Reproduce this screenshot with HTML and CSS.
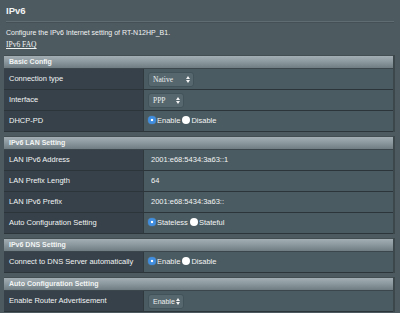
FILE: index.html
```html
<!DOCTYPE html>
<html>
<head>
    <title>IPv6</title>
    <link rel="stylesheet" href="styles.css">
</head>
<body>
    <div class="page">
        <div class="title">IPv6</div>
        <div class="divider"></div>
        <div class="desc">Configure the IPv6 Internet setting of RT-N12HP_B1.</div>
        <a class="faq" href="#">IPv6 FAQ</a>

        <table class="setting first">
            <tr class="head"><th colspan="2">Basic Config</th></tr>
            <tr>
                <td class="label">Connection type</td>
                <td class="value"><span class="select serif w-native">Native<span class="arrows"></span></span></td>
            </tr>
            <tr>
                <td class="label">Interface</td>
                <td class="value"><span class="select serif w-ppp">PPP<span class="arrows"></span></span></td>
            </tr>
            <tr>
                <td class="label">DHCP-PD</td>
                <td class="value">
                    <span class="radio on"></span>Enable
                    <span class="radio"></span>Disable
                </td>
            </tr>
        </table>

        <table class="setting">
            <tr class="head"><th colspan="2">IPv6 LAN Setting</th></tr>
            <tr>
                <td class="label">LAN IPv6 Address</td>
                <td class="value text">2001:e68:5434:3a63::1</td>
            </tr>
            <tr>
                <td class="label">LAN Prefix Length</td>
                <td class="value text">64</td>
            </tr>
            <tr>
                <td class="label">LAN IPv6 Prefix</td>
                <td class="value text">2001:e68:5434:3a63::</td>
            </tr>
            <tr>
                <td class="label">Auto Configuration Setting</td>
                <td class="value">
                    <span class="radio on"></span>Stateless
                    <span class="radio"></span>Stateful
                </td>
            </tr>
        </table>

        <table class="setting">
            <tr class="head"><th colspan="2">IPv6 DNS Setting</th></tr>
            <tr>
                <td class="label">Connect to DNS Server automatically</td>
                <td class="value">
                    <span class="radio on"></span>Enable
                    <span class="radio"></span>Disable
                </td>
            </tr>
        </table>

        <table class="setting">
            <tr class="head"><th colspan="2">Auto Configuration Setting</th></tr>
            <tr>
                <td class="label">Enable Router Advertisement</td>
                <td class="value"><span class="select w-enable">Enable<span class="arrows"></span></span></td>
            </tr>
        </table>
    </div>
</body>
</html>
```

FILE: styles.css
```css
html, body {
    margin: 0;
    padding: 0;
    background-color: #4d5a60;
}
body {
    font-family: "Liberation Sans", Arial, sans-serif;
    font-size: 7.5px;
    color: #f2f4f4;
    overflow: hidden;
}
.page {
    width: 392px;
    padding: 4px 0 0 4px;
}
.title {
    font-size: 9.5px;
    font-weight: bold;
    padding-left: 2px;
    height: 13px;
    line-height: 13px;
}
.divider {
    height: 1px;
    margin: 4px 2px 0 2px;
    background-color: #5f6c72;
    border-bottom: 1px solid #445056;
}
.desc {
    padding-left: 2px;
    margin-top: 4px;
    height: 12px;
    line-height: 12px;
    font-size: 7px;
}
.faq {
    display: block;
    padding-left: 2px;
    font-family: "Liberation Serif", "Times New Roman", serif;
    font-size: 7.5px;
    color: #f2f4f4;
    text-decoration: underline;
    height: 11px;
    line-height: 11px;
}
.setting {
    width: 391px;
    border-collapse: separate;
    border-spacing: 0;
    margin-top: 4px;
    border-right: 2px solid #3c474c;
}
.setting.first {
    margin-top: 5px;
}
.setting tr {
    height: 21px;
}
.setting tr.head {
    height: 14px;
}
.setting th {
    text-align: left;
    font-weight: bold;
    font-size: 7px;
    line-height: 10px;
    padding: 0 0 0 5px;
    background: linear-gradient(#a2aeb3, #8d9a9f 45%, #6f7d83);
    border-top: 1px solid #434e53;
    border-bottom: 1px solid #3a464b;
}
.setting td {
    padding-top: 0;
    padding-bottom: 0;
    line-height: 10px;
    border-bottom: 1px solid #2c3539;
}
.label {
    width: 133px;
    padding-left: 5px;
    background-color: #36414a;
    border-right: 1px solid #2f393e;
}
.value {
    background-color: #4a5b61;
    padding-left: 4px;
}
.value.text {
    padding-left: 7px;
}
.select {
    display: inline-block;
    position: relative;
    box-sizing: border-box;
    height: 15px;
    line-height: 13px;
    padding-left: 4px;
    border: 1px solid #43535a;
    border-radius: 3px;
    background-color: #56676e;
    color: #eef0f0;
    vertical-align: middle;
}
.serif {
    font-family: "Liberation Serif", "Times New Roman", serif;
    font-size: 7.5px;
}
.w-native { width: 46px; }
.w-ppp { width: 36px; }
.w-enable { width: 36px; font-size: 7px; }
.arrows {
    position: absolute;
    right: 3px;
    top: 3px;
    width: 4px;
    height: 7px;
}
.arrows::before, .arrows::after {
    content: "";
    position: absolute;
    left: 0;
    border-left: 2px solid transparent;
    border-right: 2px solid transparent;
}
.arrows::before {
    top: 0;
    border-bottom: 3px solid #f4f4f4;
}
.arrows::after {
    bottom: 0;
    border-top: 3px solid #f4f4f4;
}
.radio {
    display: inline-block;
    box-sizing: border-box;
    width: 8px;
    height: 8px;
    border-radius: 50%;
    background-color: #ffffff;
    vertical-align: -1px;
    margin-right: 1px;
}
.radio.on {
    background: radial-gradient(circle, #ffffff 0 1.3px, #3f8ee0 1.6px);
    box-shadow: 0 0 1px #6fb0f0;
}
```
